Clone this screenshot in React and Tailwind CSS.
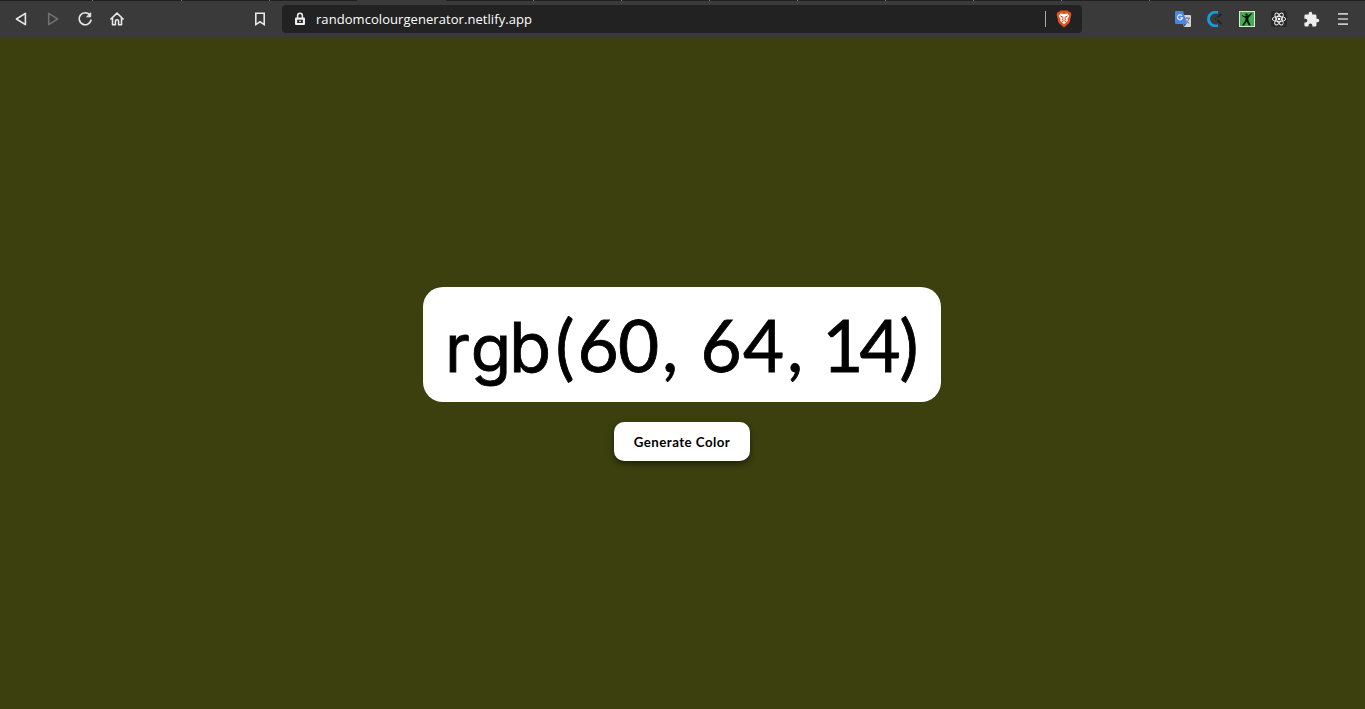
import React from "react";

const glyphs = [
  ["r", "w-[31px] text-[66px] font-['Comic_Sans_MS',Inter,sans-serif]"],
  ["g", "w-[36px] text-[66px] font-['Comic_Sans_MS',Inter,sans-serif]"],
  ["b", "w-[42px] text-[69px] font-['Comic_Sans_MS',Inter,sans-serif]"],
  ["(", "w-[28px]"],
  ["6", "w-[38px]"], ["0", "w-[43px]"], [",", "w-[20px]"], [" ", "w-[20px]"],
  ["6", "w-[42px]"], ["4", "w-[43px]"], [",", "w-[20px]"], [" ", "w-[18px]"],
  ["14", "w-[73px] tracking-[-4px]"], [")", "w-[26px]"],
];

const tabEdges = ["left-[92px]", "left-[181px]", "left-[269px]", "left-[533px]", "left-[621px]", "left-[709px]", "left-[797px]", "left-[885px]", "left-[973px]", "left-[1061px]", "left-[1149px]"];

function Nav({ children, className = "" }) {
  return (
    <svg viewBox="0 0 16 16" className={"h-4 w-4 shrink-0 " + className} fill="none" stroke="currentColor" strokeWidth="1.6" strokeLinejoin="round" strokeLinecap="round">
      {children}
    </svg>
  );
}

function Toolbar() {
  return (
    <header className="relative flex h-[38px] shrink-0 items-center border-t border-[#202020] bg-[#3a3a3a] pb-px text-[#e8e8e8]">
      <div className="absolute -top-px left-[357px] h-px w-[89px] bg-[#3a3a3a]" />
      {tabEdges.map((c) => <i key={c} className={"absolute -top-px h-px w-px bg-[#888] " + c} />)}
      <div className="flex w-[282px] items-center pl-[13px]">
        <Nav><path d="M12.4 2.4v11.2L3.4 8z" /></Nav>
        <Nav className="ml-4 text-[#707070]"><path d="M3.7 2.4v11.2L12.6 8z" /></Nav>
        <Nav className="ml-4">
          <path d="M12.8 3.9A6 6 0 1 0 14 9.2" strokeWidth="1.7" />
          <path d="M13.7 2.2v3.6h-3.7z" fill="currentColor" strokeWidth="1" />
        </Nav>
        <Nav className="ml-4">
          <path d="M1.9 8 8 2.2 14.1 8M3.5 7v6.8h2.9v-3.4a1.6 1.6 0 0 1 3.2 0v3.4h2.9V7" />
        </Nav>
        <Nav className="ml-[127px]"><path d="M3.8 2.2h8.4v11.4L8 10.8l-4.2 2.8z" strokeLinejoin="miter" /></Nav>
      </div>
      <div className="flex h-[28px] w-[800px] items-center rounded-[4px] bg-[#222] pl-3">
        <svg viewBox="0 0 12 14" className="h-[14px] w-3">
          <path d="M3.6 6V3.7a2.4 2.4 0 0 1 4.8 0V6" fill="none" stroke="#eee" strokeWidth="1.5" />
          <rect x="1" y="5.6" width="10" height="7.4" rx="1" fill="#eee" />
          <path d="M3.2 7.7h5.6v3.3H3.2z" fill="#222" />
          <rect x="5.2" y="8.6" width="1.6" height="1.5" fill="#eee" />
        </svg>
        <span className="ml-[10px] w-[230px] whitespace-nowrap font-['Segoe_UI','Open_Sans',sans-serif] text-[13px] leading-[18px] tracking-[0.06px] text-white">randomcolourgenerator.netlify.app</span>
        <span className="ml-[499px] h-4 w-px shrink-0 bg-[#aaa]" />
        <svg viewBox="0 0 16 18" className="ml-[10px] h-[18px] w-4 shrink-0">
          <path d="M4.3.5h7.4l1.4 1.6 1.5.2.9 2.5-.6 1.4-1.4 6.5L8 17.5l-5.5-4.8L1.1 6.2.5 4.8l.9-2.5 1.5-.2z" fill="#e5521f" />
          <path d="M4.5 3.5 8 4l3.5-.5 1.9 2.6-2 2.8.5 1.7-3.9 3.7-3.9-3.7.5-1.7-2-2.8z" fill="#fff" />
          <path d="M4.4 6.1l2.3.8.3 2.4-1.3.8M11.6 6.1l-2.3.8-.3 2.4 1.3.8M6 11.6l2-1 2 1" fill="none" stroke="#e5521f" strokeWidth="1" />
        </svg>
      </div>
      <div className="ml-[93px] flex items-center gap-4">
        <svg viewBox="0 0 16 16" className="h-4 w-4">
          <path d="M6 4h9a1 1 0 0 1 1 1v10a1 1 0 0 1-1 1H9z" fill="#d5d5d5" />
          <path d="M9 7.2h6M12 6v1.2M14 7.5c-.5 2.4-2 4-4 5M10.3 8c.7 2 2 3.5 4 4.3" stroke="#68757b" strokeWidth="1" fill="none" />
          <path d="M1 0h7l4 13H1a1 1 0 0 1-1-1V1a1 1 0 0 1 1-1z" fill="#4b83e6" />
          <path d="m8.6 13 2.8 0L9 16z" fill="#315fb4" />
          <path d="M7 4.7A2.5 2.5 0 1 0 7.5 6.7H5.2" stroke="#fff" strokeWidth="1.1" fill="none" />
        </svg>
        <svg viewBox="0 0 16 16" className="h-4 w-4">
          <path d="M11 1.4C5.5.3 1.5 3.6 1.5 8s4 7.7 9.5 6.6" stroke="#179bdd" strokeWidth="2.8" fill="none" />
          <path d="m14.5 3-4 3.5M10.3 9.3 14.5 13M8.2 8h1" stroke="#242424" strokeWidth="2" />
        </svg>
        <svg viewBox="0 0 16 16" className="h-4 w-4">
          <rect x=".5" y=".5" width="15" height="15" fill="#45ad50" stroke="#d9ead9" />
          <path d="M3 4 5.5 5.3 8 4.8 12.6 2l.5.8-3.6 4-.2 2 2.4 5.7H9.8L7.7 10.7 5 14.5H3l3.3-5.3.2-2.3L3 5z" fill="#09160b" />
          <circle cx="7.5" cy="3.6" r="1.2" fill="#09160b" />
        </svg>
        <svg viewBox="0 0 16 16" className="h-4 w-4">
          <rect width="16" height="16" rx="2" fill="#292929" />
          <g fill="none" stroke="#f0f0f0" strokeWidth=".95">
            <ellipse cx="8" cy="8" rx="6.7" ry="2.6" />
            <ellipse cx="8" cy="8" rx="6.7" ry="2.6" transform="rotate(60 8 8)" />
            <ellipse cx="8" cy="8" rx="6.7" ry="2.6" transform="rotate(120 8 8)" />
          </g>
          <circle cx="8" cy="8" r="1.3" fill="#fff" />
        </svg>
        <svg viewBox="0 0 24 24" className="h-[17px] w-[17px]" fill="#eee">
          <path d="M20.5 11H19V7a2 2 0 0 0-2-2h-4V3.5a2.5 2.5 0 0 0-5 0V5H4a2 2 0 0 0-2 2v3.8h1.5a2.7 2.7 0 0 1 0 5.4H2V20a2 2 0 0 0 2 2h3.8v-1.5a2.7 2.7 0 0 1 5.4 0V22H17a2 2 0 0 0 2-2v-4h1.5a2.5 2.5 0 0 0 0-5z" />
        </svg>
        <svg viewBox="0 0 16 16" className="-ml-px h-4 w-4" stroke="#c8c8c8" strokeWidth="1.7"><path d="M3 2.8h10M3 8h10M3 13.2h10" /></svg>
      </div>
    </header>
  );
}

export default function App() {
  return (
    <div className="flex h-screen flex-col overflow-hidden bg-[#3c400e]">
      <Toolbar />
      <main className="flex flex-1 flex-col items-center pr-px pt-[249px] font-['Comic_Sans_MS',Lato,sans-serif] text-black">
        <h1 className="flex h-[115px] w-[518px] items-baseline justify-center rounded-[20px] bg-white pt-[22px] text-[71px] leading-none [-webkit-text-stroke:0.8px_black]">
          {glyphs.map(([g, w], i) => <span key={i} className={"flex justify-center whitespace-pre leading-none " + w}>{g}</span>)}
        </h1>
        <button className="mt-5 h-[39px] w-[136px] whitespace-nowrap rounded-[10px] bg-white pt-[2px] text-[13.3px] font-bold tracking-[0.44px] shadow-[0_3px_6px_rgba(0,0,0,0.5)]">Generate Color</button>
      </main>
    </div>
  );
}
